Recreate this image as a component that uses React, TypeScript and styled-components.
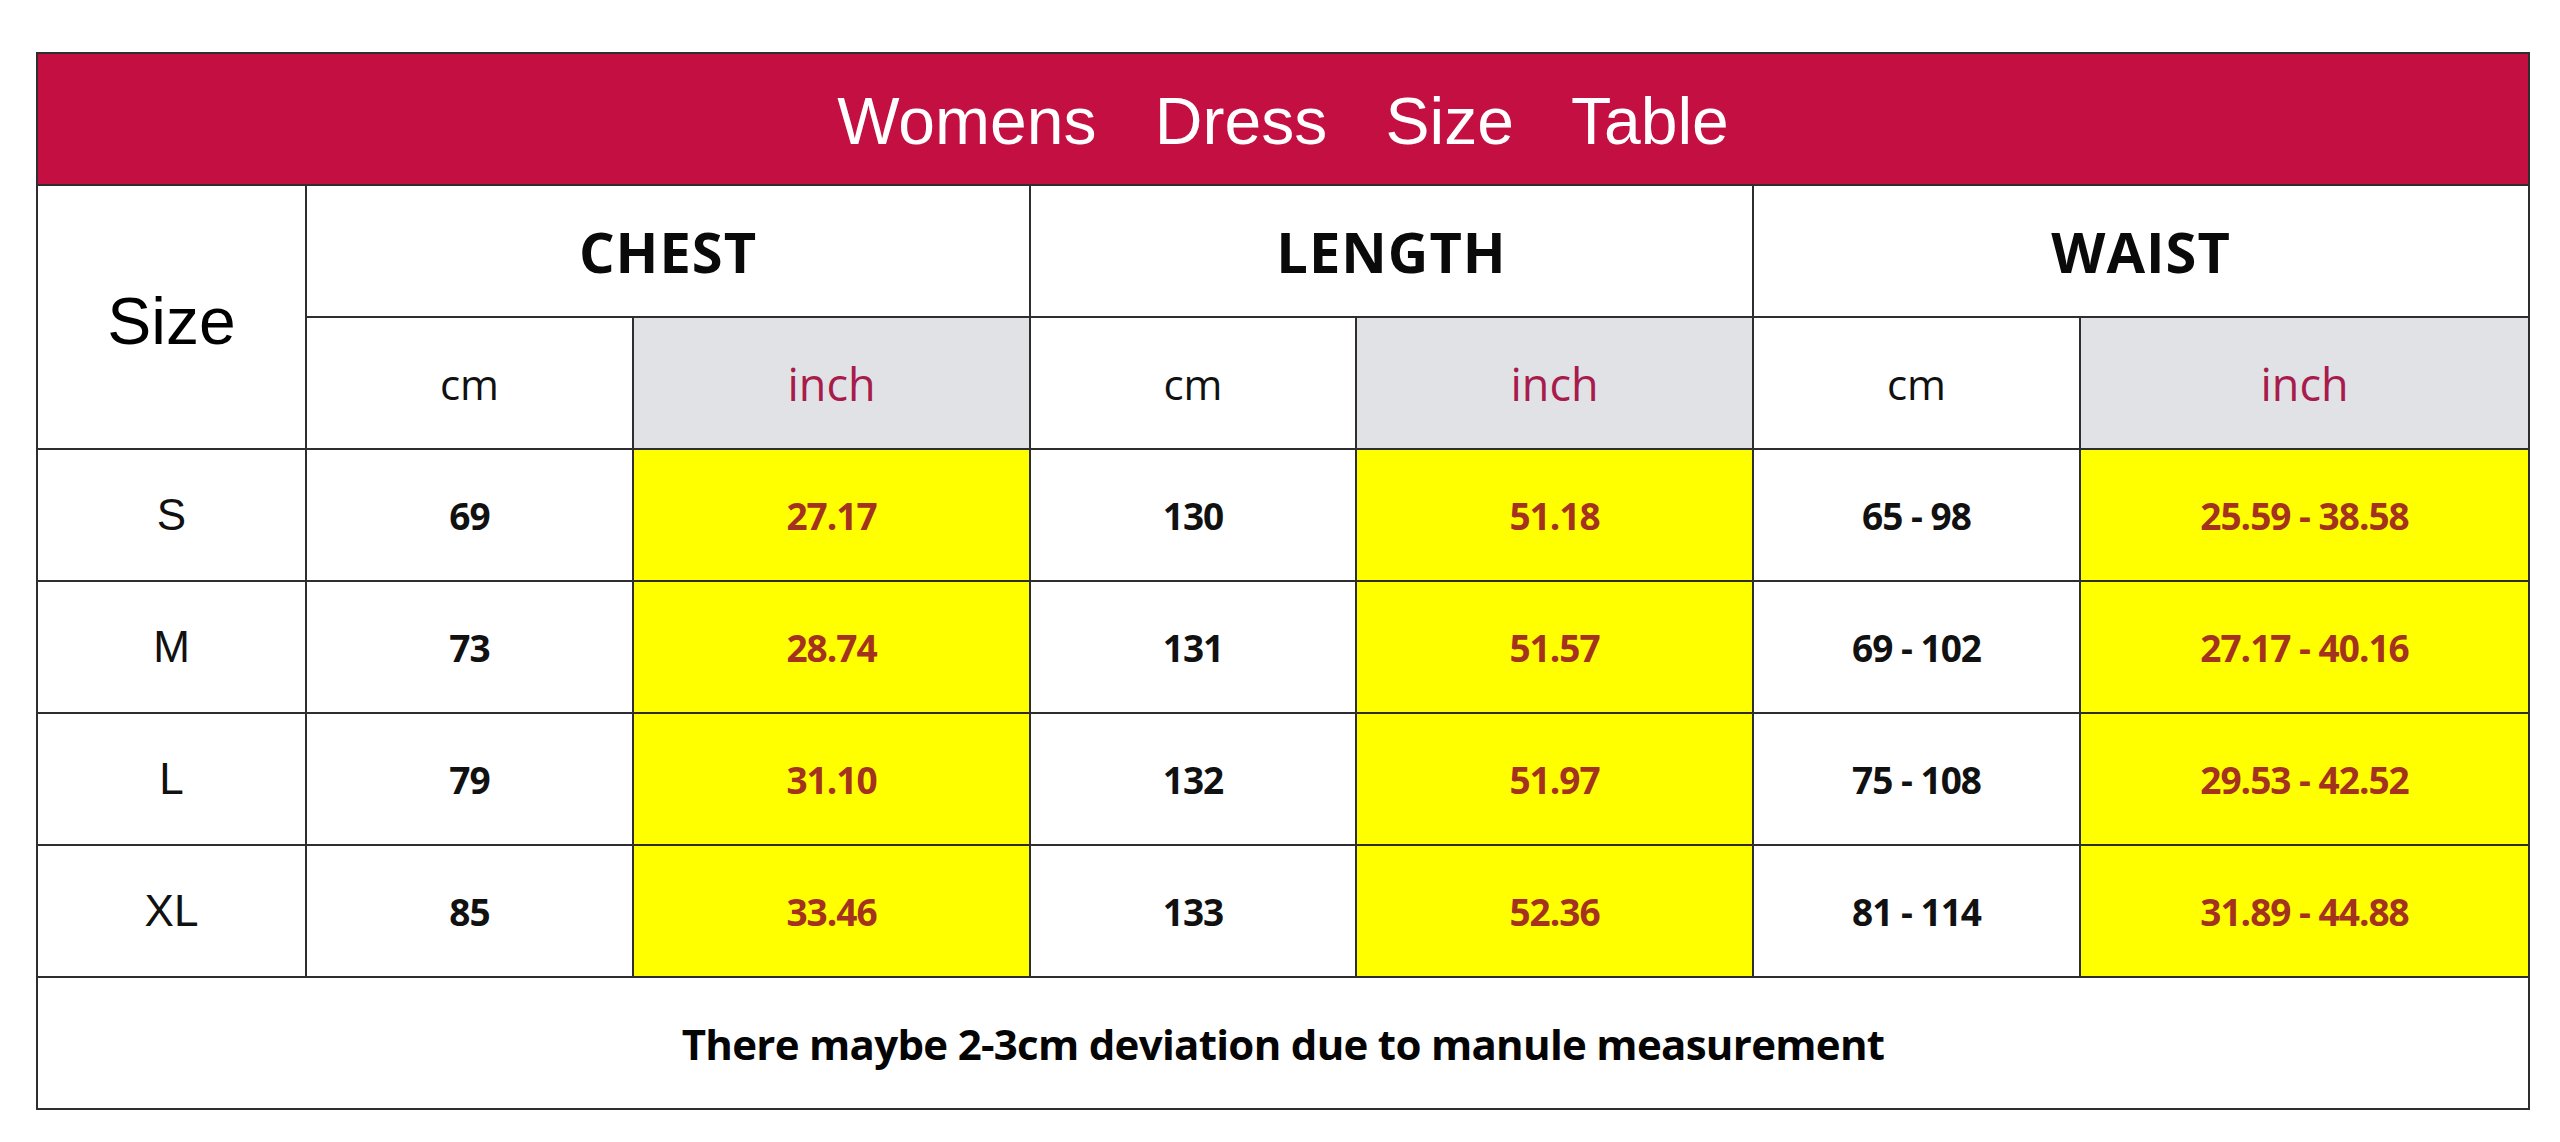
import React from "react";
import styled, { createGlobalStyle } from "styled-components";

interface SizeRow {
  size: string;
  chest: [string, string];
  length: [string, string];
  waist: [string, string];
}

const rows: SizeRow[] = [
  { size: "S", chest: ["69", "27.17"], length: ["130", "51.18"], waist: ["65 - 98", "25.59 - 38.58"] },
  { size: "M", chest: ["73", "28.74"], length: ["131", "51.57"], waist: ["69 - 102", "27.17 - 40.16"] },
  { size: "L", chest: ["79", "31.10"], length: ["132", "51.97"], waist: ["75 - 108", "29.53 - 42.52"] },
  { size: "XL", chest: ["85", "33.46"], length: ["133", "52.36"], waist: ["81 - 114", "31.89 - 44.88"] },
];

const columnWidths = [269, 327, 397, 326, 397, 327, 449];
const groups = ["CHEST", "LENGTH", "WAIST"];

const App: React.FC = () => {
  return (
    <>
      <GlobalStyle />
      <Page>
        <Table>
          <colgroup>
            {columnWidths.map((w, i) => (
              <col key={i} style={{ width: w }} />
            ))}
          </colgroup>
          <tbody>
            <Row>
              <TitleCell colSpan={7}>Womens Dress Size Table</TitleCell>
            </Row>
            <Row>
              <SizeHead rowSpan={2}>Size</SizeHead>
              {groups.map((g) => (
                <GroupHead key={g} colSpan={2}>
                  {g}
                </GroupHead>
              ))}
            </Row>
            <Row>
              {groups.map((g) => (
                <React.Fragment key={g}>
                  <UnitHead>cm</UnitHead>
                  <UnitHead $inch>inch</UnitHead>
                </React.Fragment>
              ))}
            </Row>
            {rows.map((r) => (
              <Row key={r.size}>
                <SizeCell>{r.size}</SizeCell>
                {[r.chest, r.length, r.waist].map(([cm, inch], i) => (
                  <React.Fragment key={i}>
                    <ValueCell>{cm}</ValueCell>
                    <ValueCell $inch>{inch}</ValueCell>
                  </React.Fragment>
                ))}
              </Row>
            ))}
            <Row>
              <NoteCell colSpan={7}>
                There maybe 2-3cm deviation due to manule measurement
              </NoteCell>
            </Row>
          </tbody>
        </Table>
      </Page>
    </>
  );
};

export default App;

const GlobalStyle = createGlobalStyle`
  html, body {
    margin: 0;
    padding: 0;
    background: #ffffff;
  }
`;

const Page = styled.div`
  width: 2560px;
  height: 1142px;
  padding: 52px 30px 0 36px;
  box-sizing: border-box;
  background: #ffffff;
`;

const Table = styled.table`
  width: 2492px;
  border-collapse: collapse;
  table-layout: fixed;
`;

const Row = styled.tr`
  height: 132px;
`;

const Cell = styled.td`
  border: 2px solid #2e2e30;
  text-align: center;
  vertical-align: middle;
  padding: 0;
`;

const TitleCell = styled(Cell)`
  background: #c30f41;
  color: #ffffff;
  font-family: "Liberation Sans", Arial, sans-serif;
  font-size: 66px;
  word-spacing: 40px;
  padding-top: 4px;
`;

const SizeHead = styled(Cell)`
  font-family: "Liberation Sans", Arial, sans-serif;
  font-size: 66px;
  color: #000000;
  padding-top: 8px;
`;

const GroupHead = styled(Cell)`
  font-family: "Open Sans", sans-serif;
  font-weight: 700;
  font-size: 56px;
  letter-spacing: 1px;
  color: #0a0a0a;
`;

const UnitHead = styled(Cell)<{ $inch?: boolean }>`
  font-family: "Open Sans", sans-serif;
  font-size: ${(p) => (p.$inch ? "45px" : "42px")};
  color: ${(p) => (p.$inch ? "#a81c4c" : "#111111")};
  background: ${(p) => (p.$inch ? "#e1e2e6" : "#ffffff")};
`;

const SizeCell = styled(Cell)`
  font-family: "Liberation Sans", Arial, sans-serif;
  font-size: 44px;
  color: #111111;
`;

const ValueCell = styled(Cell)<{ $inch?: boolean }>`
  font-family: "Open Sans", sans-serif;
  font-weight: 700;
  font-size: 37px;
  letter-spacing: -1px;
  color: ${(p) => (p.$inch ? "#a3321f" : "#111111")};
  background: ${(p) => (p.$inch ? "#ffff00" : "#ffffff")};
`;

const NoteCell = styled(Cell)`
  font-family: "Open Sans", sans-serif;
  font-weight: 700;
  font-size: 42px;
  letter-spacing: -0.7px;
  color: #050505;
`;
